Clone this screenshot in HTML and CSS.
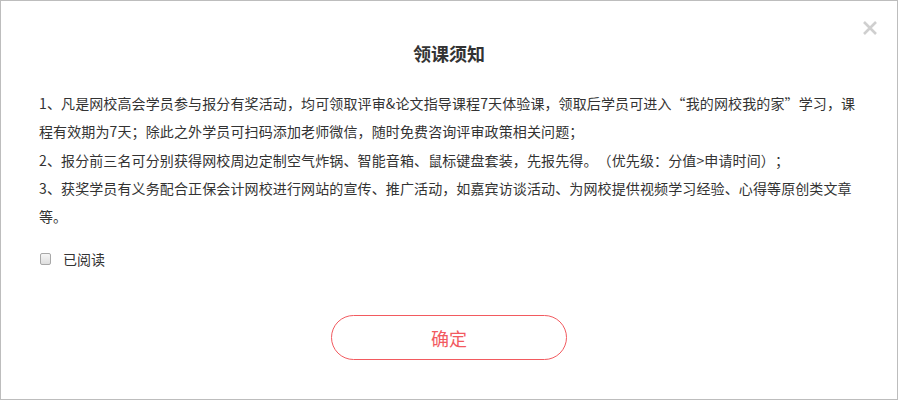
FILE: index.html
```html
<!DOCTYPE html>
<html lang="zh-CN">
<head>
    <meta charset="UTF-8">
    <title>领课须知</title>
    <link rel="stylesheet" href="styles.css">
</head>
<body>
    <div class="dialog">
        <span class="close">
            <svg width="16" height="16" viewBox="0 0 16 16"><path d="M2 2L14 14M14 2L2 14" stroke="#cfcfcf" stroke-width="2.6"/></svg>
        </span>
        <h2 class="title">领课须知</h2>
        <div class="content">
            <p>1、凡是网校高会学员参与报分有奖活动，均可领取评审&amp;论文指导课程7天体验课，领取后学员可进入“我的网校我的家”学习，课程有效期为7天；除此之外学员可扫码添加老师微信，随时免费咨询评审政策相关问题；</p>
            <p>2、报分前三名可分别获得网校周边定制空气炸锅、智能音箱、鼠标键盘套装，先报先得。（优先级：分值&gt;申请时间）；</p>
            <p>3、获奖学员有义务配合正保会计网校进行网站的宣传、推广活动，如嘉宾访谈活动、为网校提供视频学习经验、心得等原创类文章等。</p>
        </div>
        <label class="agree"><input type="checkbox"> 已阅读</label>
        <div class="actions">
            <button class="btn-ok">确定</button>
        </div>
    </div>
</body>
</html>
```

FILE: styles.css
```css
body {
    margin: 0;
    font-family: "Noto Sans CJK SC", sans-serif;
    color: #333;
    background: #fff;
}

.dialog {
    position: relative;
    box-sizing: border-box;
    width: 898px;
    height: 400px;
    border: 1px solid #bdbdbd;
    padding: 30px 39px 0 38px;
}

.close {
    position: absolute;
    top: 19px;
    right: 19px;
    width: 16px;
    height: 16px;
    cursor: pointer;
}

.close svg {
    display: block;
}

.title {
    margin: 0 -1px 14px 0;
    text-align: center;
    font-size: 18px;
    font-weight: bold;
    line-height: 44px;
}

.content p {
    margin: 0;
    font-size: 14px;
    line-height: 28.3px;
    letter-spacing: 0.12px;
    text-spacing-trim: space-all;
}

.agree {
    display: flex;
    align-items: center;
    height: 20px;
    margin-top: 19px;
    font-size: 14px;
    color: #333;
}

.agree input {
    appearance: none;
    box-sizing: border-box;
    width: 11px;
    height: 12px;
    margin: 0 12px 0 1px;
    border: 1px solid #a8a8a8;
    border-radius: 2px;
    background: linear-gradient(#f6f6f6, #dedede);
}

.actions {
    display: flex;
    justify-content: center;
    margin: 46px -1px 0 0;
}

.btn-ok {
    width: 236px;
    height: 45px;
    border: 1px solid #f25a5f;
    border-radius: 23px;
    background: #fff;
    color: #f25a5f;
    font-family: inherit;
    font-size: 18px;
    cursor: pointer;
}
```
